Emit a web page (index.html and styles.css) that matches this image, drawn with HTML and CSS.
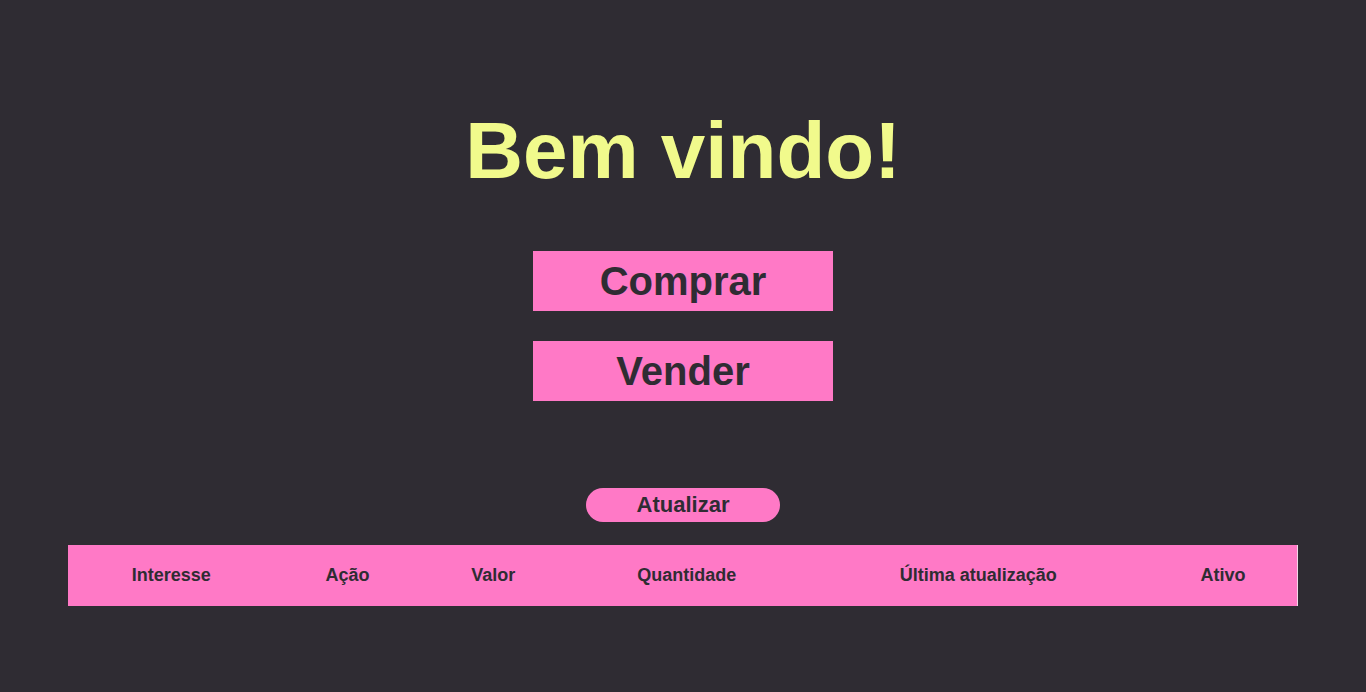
FILE: index.html
```html
<!DOCTYPE html>
<html lang="pt-BR">
<head>
<meta charset="utf-8">
<title>Bem vindo!</title>
<link rel="stylesheet" href="styles.css">
</head>
<body>
<main class="page">
  <h1 class="title">Bem vindo!</h1>
  <div class="actions">
    <button class="action-btn">Comprar</button>
    <button class="action-btn">Vender</button>
  </div>
  <button class="refresh-btn">Atualizar</button>
  <table class="orders">
    <thead>
      <tr>
        <th>Interesse</th>
        <th>Ação</th>
        <th>Valor</th>
        <th>Quantidade</th>
        <th>Última atualização</th>
        <th>Ativo</th>
      </tr>
    </thead>
  </table>
</main>
</body>
</html>
```

FILE: styles.css
```css
html, body {
  margin: 0;
  padding: 0;
  background: #2f2c33;
  height: 100%;
}

body {
  font-family: "Liberation Sans", Arial, sans-serif;
  color: #2f2c33;
}

.page {
  display: flex;
  flex-direction: column;
  align-items: center;
  padding-top: 105px;
}

.title {
  margin: 0;
  font-size: 80px;
  font-weight: 700;
  line-height: 92px;
  color: #f1fa8c;
}

.actions {
  display: flex;
  flex-direction: column;
  gap: 30px;
  margin-top: 54px;
}

.action-btn {
  width: 300px;
  height: 60px;
  border: none;
  padding: 0;
  background: #ff79c6;
  color: #2f2c33;
  font-family: inherit;
  font-size: 40px;
  font-weight: 700;
  display: flex;
  align-items: center;
  justify-content: center;
}

.refresh-btn {
  margin-top: 87px;
  width: 194px;
  height: 34px;
  border: none;
  padding: 0;
  border-radius: 17px;
  background: #ff79c6;
  color: #2f2c33;
  font-family: inherit;
  font-size: 22px;
  font-weight: 700;
}

.orders {
  margin-top: 23px;
  width: 1230px;
  border-collapse: collapse;
  background: #ff79c6;
  border-right: 1px solid #f3d6e8;
}

.orders th {
  padding: 20px 20px;
  font-size: 18px;
  font-weight: 700;
  color: #2f2c33;
  text-align: center;
}
```
